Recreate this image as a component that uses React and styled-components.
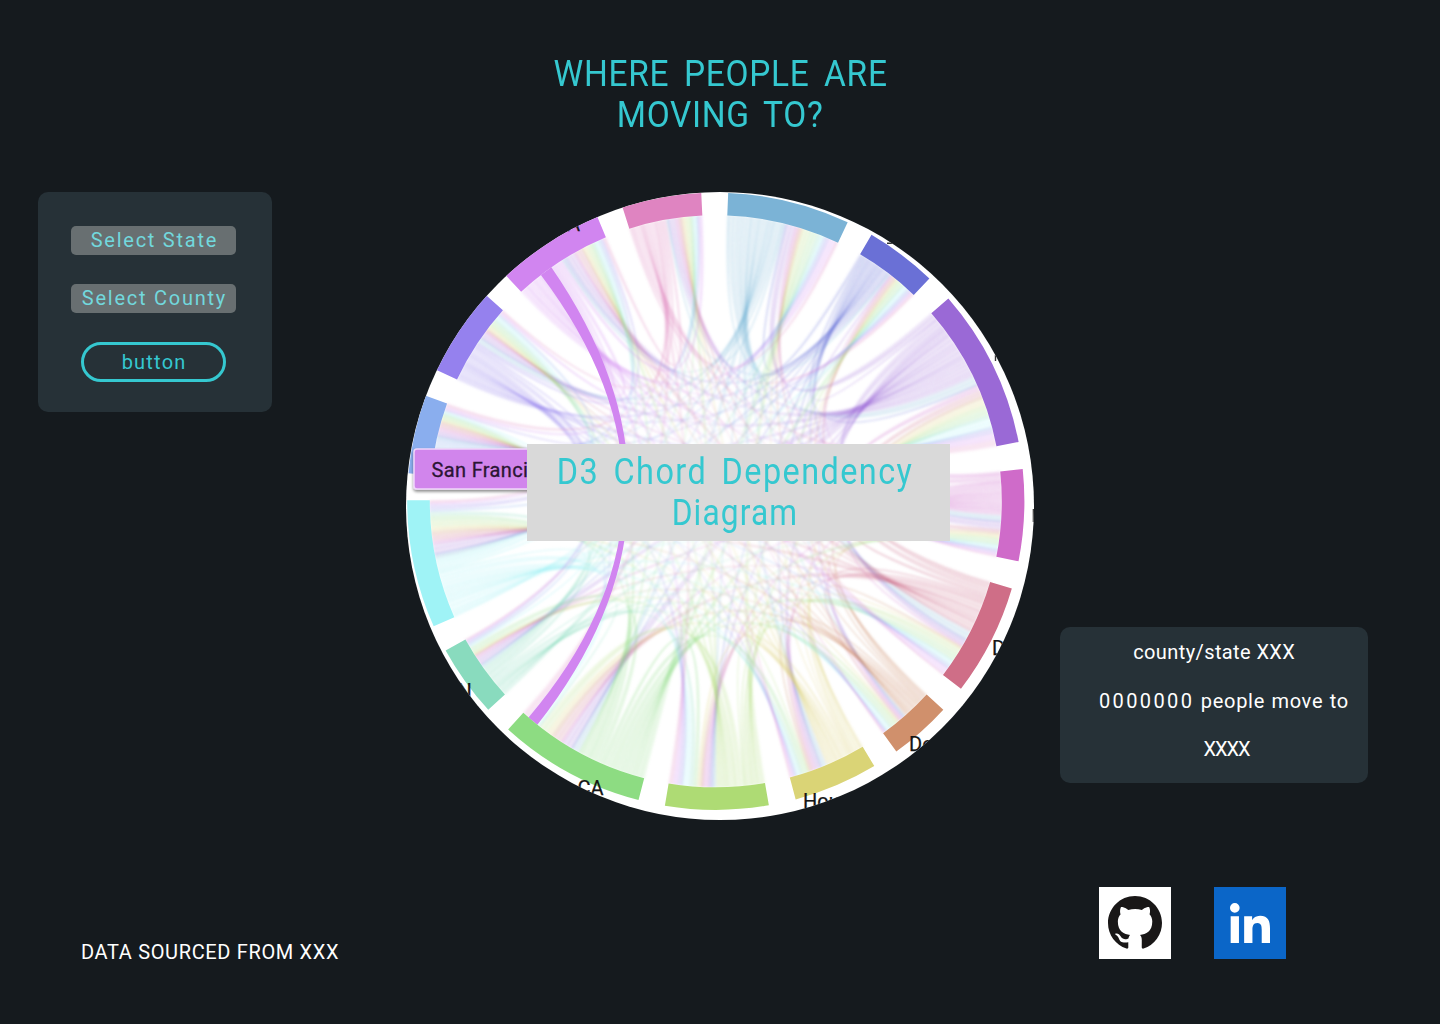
import React from "react";
import styled, { createGlobalStyle } from "styled-components";

const GlobalStyle = createGlobalStyle`
  *, *::before, *::after { box-sizing: border-box; }
  html, body { margin: 0; background: #151a1e; }
`;

const Page = styled.div`
  width: 1440px;
  height: 1024px;
  display: flex;
  flex-direction: column;
  overflow: hidden;
  background: #151a1e;
  color: #fff;
  font-family: Roboto, "Liberation Sans", sans-serif;
`;

const Header = styled.header`
  height: 192px;
  padding-top: 54px;
  flex: none;
`;

const Title = styled.h1`
  margin: 0;
  display: flex;
  flex-direction: column;
  align-items: center;
  font-size: 36px;
  line-height: 41px;
  font-weight: 400;
  color: #35c8d0;
`;

const Line = styled.span`
  display: block;
  white-space: nowrap;
  letter-spacing: ${(p) => p.$spacing || 0}px;
  word-spacing: ${(p) => p.$word || 0}px;
  margin-right: ${(p) => -(p.$spacing || 0)}px;
  margin-left: ${(p) => p.$inset || 0}px;
  transform: ${(p) => (p.$narrow ? `scaleX(${p.$narrow})` : "none")};
`;

const Main = styled.main`
  height: 628px;
  flex: none;
  display: flex;
  align-items: flex-start;
  padding-left: 38px;
`;

const FilterPanel = styled.section`
  width: 234px;
  height: 220px;
  padding: 34px 36px 0 33px;
  display: flex;
  flex-direction: column;
  align-items: center;
  gap: 29px;
  border-radius: 10px;
  background: #263137;
`;

const Select = styled.button`
  width: 165px;
  height: 29px;
  padding: 0;
  border: 0;
  border-radius: 5px;
  background: #686f71;
  color: #72d8dd;
  font: 400 20px/29px Roboto, sans-serif;
  display: flex;
  justify-content: center;
`;

const PillButton = styled.button`
  width: 145px;
  height: 40px;
  padding: 0;
  border: 3px solid #35c8d0;
  border-radius: 20px;
  background: transparent;
  color: #35c8d0;
  font: 400 20px/34px Roboto, sans-serif;
  display: flex;
  justify-content: center;
`;

const Chart = styled.section`
  position: relative;
  width: 628px;
  height: 628px;
  margin-left: 134px;
  flex: none;
`;

const ChordSvg = styled.svg`
  display: block;
`;

const ChartCaption = styled.h2`
  position: absolute;
  left: 121px;
  top: 252px;
  width: 423px;
  height: 97px;
  margin: 0;
  padding: 8px 9px 0 0;
  display: flex;
  flex-direction: column;
  align-items: center;
  background: #d9d9d9;
  color: #35c8d0;
  font-size: 36px;
  line-height: 41px;
  font-weight: 400;
`;

const InfoCard = styled.aside`
  width: 308px;
  height: 156px;
  margin: 435px 0 0 26px;
  padding-top: 1px;
  display: flex;
  flex-direction: column;
  align-items: center;
  border-radius: 10px;
  background: #263137;
  font-size: 20px;
  line-height: 48.5px;
`;

const InfoDetail = styled.div`
  padding-left: 19px;
  display: flex;
  flex-direction: column;
  align-items: center;
`;

const Figure = styled.span`
  letter-spacing: 2.4px;
`;

const Footer = styled.footer`
  display: flex;
  justify-content: space-between;
  padding: 67px 154px 0 81px;
`;

const Source = styled.p`
  margin: 50px 0 0;
  font-size: 20px;
  line-height: 30px;
`;

const Links = styled.nav`
  display: flex;
  gap: 43px;
`;

const IconLink = styled.a`
  width: 72px;
  height: 72px;
  display: flex;
  align-items: center;
  justify-content: center;
  background: ${(p) => p.$bg};
`;

const CX = 309.8;
const CY = 309.3;
const INNER = 286;
const OUTER = 308.6;

const groups = [
  { a0: 2.3, a1: 25.3, color: "#7bb3d6" },
  { a0: 30.3, a1: 43.8, color: "#6a70d6" },
  { a0: 48.9, a1: 78.9, color: "#9a69d6" },
  { a0: 84, a1: 101.2, color: "#cf6bc9" },
  { a0: 106.4, a1: 127.4, color: "#cf6e87" },
  { a0: 132.5, a1: 144.2, color: "#d0906c" },
  { a0: 149.1, a1: 165, color: "#dad476" },
  { a0: 170.1, a1: 189.5, color: "#aedb74" },
  { a0: 194.5, a1: 222.3, color: "#8ddc82" },
  { a0: 227.5, a1: 241.1, color: "#89dbbe" },
  { a0: 246.1, a1: 270.2, color: "#9ff3f6" },
  { a0: 275.2, a1: 290, color: "#8aaeee" },
  { a0: 295.2, a1: 311.9, color: "#9581ee" },
  { a0: 317.1, a1: 337.4, color: "#d185f0" },
  { a0: 342.4, a1: 357.3, color: "#df84c1" },
];

const OWN_SHARE = 0.51;

const pt = (deg, r) => {
  const t = (deg * Math.PI) / 180;
  return `${(CX + r * Math.sin(t)).toFixed(2)} ${(CY - r * Math.cos(t)).toFixed(2)}`;
};

const arcPath = ({ a0, a1 }) =>
  `M${pt(a0, OUTER)}A${OUTER} ${OUTER} 0 0 1 ${pt(a1, OUTER)}L${pt(a1, INNER)}A${INNER} ${INNER} 0 0 0 ${pt(a0, INNER)}Z`;

const noise = (i, j) => {
  const v = Math.sin(i * 127.1 + j * 311.7 + 4.2) * 43758.5453;
  return v - Math.floor(v);
};

const weight = (i, j) =>
  (groups[j].a1 - groups[j].a0) * (0.35 + 1.3 * noise(i, j));

const allocate = (from, to, weights) => {
  const total = weights.reduce((s, w) => s + w, 0);
  let at = from;
  return weights.map((w) => {
    const start = at;
    at += ((to - from) * w) / total;
    return [start, at];
  });
};

const spans = groups.map((g, i) => {
  const split = g.a0 + (g.a1 - g.a0) * OWN_SHARE;
  return {
    out: allocate(g.a0, split, groups.map((_, j) => (j === i ? 0 : weight(i, j)))),
    inc: allocate(split, g.a1, groups.map((h, j) => (j === i ? 0 : weight(j, i) * (h.a1 - h.a0)))),
  };
});

const STRANDS = 2;
const ribbons = [];
groups.forEach((g, i) => {
  groups.forEach((_, j) => {
    if (i === j) return;
    const [s0, s1] = spans[i].out[j];
    const [t0, t1] = spans[j].inc[i];
    for (let k = 0; k < STRANDS; k += 1) {
      const sa = s0 + ((s1 - s0) * k) / STRANDS;
      const sb = s0 + ((s1 - s0) * (k + 1)) / STRANDS;
      const ta = t1 - ((t1 - t0) * k) / STRANDS;
      const tb = t1 - ((t1 - t0) * (k + 1)) / STRANDS;
      ribbons.push({
        key: `${i}-${j}-${k}`,
        color: g.color,
        d: `M${pt(sa, INNER)}A${INNER} ${INNER} 0 0 1 ${pt(sb, INNER)}Q${CX} ${CY} ${pt(ta, INNER)}A${INNER} ${INNER} 0 0 0 ${pt(tb, INNER)}Q${CX} ${CY} ${pt(sa, INNER)}Z`,
      });
    }
  });
});

const highlight = `M${pt(322.3, INNER)}L${pt(324.9, INNER)}Q${CX - 3} ${CY} ${pt(218.6, INNER)}L${pt(220.9, INNER)}Q${CX - 4} ${CY} ${pt(322.3, INNER)}Z`;

const labels = [
  { x: 171.5, y: 603, text: "CA" },
  { x: 586, y: 463, text: "D" },
  { x: 503, y: 559, text: "De" },
  { x: 397, y: 616, text: "Hou" },
  { x: 51.5, y: 506, text: "N" },
  { x: 161, y: 39, text: "A" },
];

const labelEdges = [
  "M627.4 317v13",
  "M481 51.3h8",
  "M589.5 163v6",
];

function ChordDiagram() {
  return (
    <ChordSvg width="628" height="628" viewBox="0 0 628 628">
      <defs>
        <clipPath id="disc">
          <circle cx="314" cy="314" r="314" />
        </clipPath>
        <filter id="soft">
          <feGaussianBlur stdDeviation="0.8" />
        </filter>
        <filter id="tipShadow" x="-10%" y="-20%" width="120%" height="160%">
          <feDropShadow dx="0" dy="2" stdDeviation="1.6" floodOpacity="0.45" />
        </filter>
      </defs>
      <g clipPath="url(#disc)">
        <rect width="628" height="628" fill="#fff" />
        <g filter="url(#soft)">
          {ribbons.map((r) => (
            <path
              key={r.key}
              d={r.d}
              fill={r.color}
              fillOpacity="0.16"
              stroke={r.color}
              strokeOpacity="0.06"
              strokeWidth="1.5"
            />
          ))}
        </g>
        <path d={highlight} fill="#d185f0" />
        {groups.map((g) => (
          <path key={g.color} d={arcPath(g)} fill={g.color} />
        ))}
        <g fill="#151515" stroke="#151515" strokeWidth="0.25" fontFamily="Roboto, sans-serif" fontSize="20">
          {labels.map((l) => (
            <text key={`${l.x}-${l.y}`} x={l.x} y={l.y}>{l.text}</text>
          ))}
        </g>
        {labelEdges.map((d) => (
          <path key={d} d={d} stroke="#333" strokeWidth="1.4" />
        ))}
        <rect x="8" y="257" width="180" height="40" rx="3" fill="#d185ec" stroke="#f0d6fa" strokeWidth="1.5" filter="url(#tipShadow)" />
        <text x="25.5" y="284.5" fill="#2b1533" stroke="#2b1533" strokeWidth="0.3" fontFamily="Roboto, sans-serif" fontSize="20" letterSpacing="0.35">San Franci</text>
      </g>
    </ChordSvg>
  );
}

function GithubMark() {
  return (
    <svg width="54" height="54" viewBox="0 0 16 16" fill="#191717">
      <path d="M8 0C3.58 0 0 3.58 0 8c0 3.54 2.29 6.53 5.47 7.59.4.07.55-.17.55-.38 0-.19-.01-.82-.01-1.49-2.01.37-2.53-.49-2.69-.94-.09-.23-.48-.94-.82-1.13-.28-.15-.68-.52-.01-.53.63-.01 1.08.58 1.23.82.72 1.21 1.87.87 2.33.66.07-.52.28-.87.51-1.07-1.78-.2-3.64-.89-3.64-3.95 0-.87.31-1.59.82-2.15-.08-.2-.36-1.02.08-2.12 0 0 .67-.21 2.2.82.64-.18 1.32-.27 2-.27s1.36.09 2 .27c1.53-1.04 2.2-.82 2.2-.82.44 1.1.16 1.92.08 2.12.51.56.82 1.27.82 2.15 0 3.07-1.87 3.75-3.65 3.95.29.25.54.73.54 1.48 0 1.07-.01 1.93-.01 2.2 0 .21.15.46.55.38A8.01 8.01 0 0 0 16 8c0-4.42-3.58-8-8-8z" />
    </svg>
  );
}

function LinkedinMark() {
  return (
    <svg width="40" height="40" viewBox="0 0 448 448" fill="#fff">
      <path d="M100.28 448H7.4V148.9h92.88zM53.79 108.1C24.09 108.1 0 83.5 0 53.8a53.79 53.79 0 0 1 107.58 0c0 29.7-24.1 54.3-53.79 54.3zM447.9 448h-92.68V302.4c0-34.7-.7-79.2-48.29-79.2-48.29 0-55.69 37.7-55.69 76.7V448h-92.78V148.9h89.08v40.8h1.3c12.4-23.5 42.69-48.3 87.88-48.3 94 0 111.28 61.9 111.28 142.3V448z" />
    </svg>
  );
}

export default function App() {
  return (
    <>
      <GlobalStyle />
      <Page>
        <Header>
          <Title>
            <Line $spacing={0.75} $word={6} $narrow={0.93}>WHERE PEOPLE ARE</Line>
            <Line $spacing={0.7} $word={5.5} $narrow={0.93}>MOVING TO?</Line>
          </Title>
        </Header>
        <Main>
          <FilterPanel>
            <Select><Line $spacing={1.75}>Select State</Line></Select>
            <Select><Line $spacing={1.75}>Select County</Line></Select>
            <PillButton><Line $spacing={1.2}>button</Line></PillButton>
          </FilterPanel>
          <Chart>
            <ChordDiagram />
            <ChartCaption>
              <Line $spacing={1.6} $word={5.5} $narrow={0.9}>D3 Chord Dependency</Line>
              <Line $spacing={1.3} $narrow={0.88}>Diagram</Line>
            </ChartCaption>
          </Chart>
          <InfoCard>
            <Line $spacing={0.4}>county/state XXX</Line>
            <InfoDetail>
              <Line $spacing={0.7} $word={0.8}><Figure>0000000</Figure> people move to</Line>
              <Line $spacing={-1} $inset={7}>XXXX</Line>
            </InfoDetail>
          </InfoCard>
        </Main>
        <Footer>
          <Source><Line $spacing={0.65}>DATA SOURCED FROM XXX</Line></Source>
          <Links>
            <IconLink $bg="#fff"><GithubMark /></IconLink>
            <IconLink $bg="#0b66c8"><LinkedinMark /></IconLink>
          </Links>
        </Footer>
      </Page>
    </>
  );
}
